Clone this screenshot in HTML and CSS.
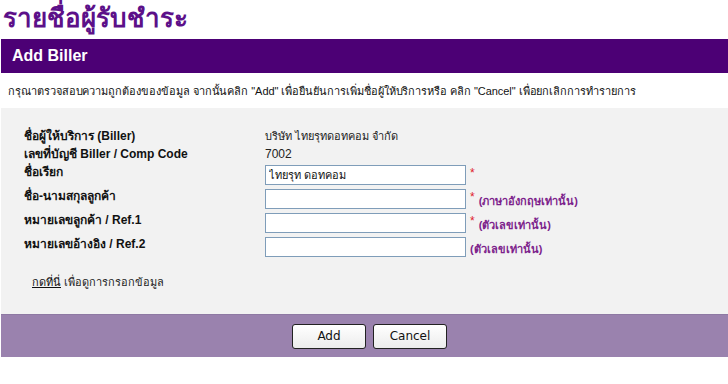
FILE: index.html
```html
<!DOCTYPE html>
<html lang="th">
<head>
  <meta charset="UTF-8" />
  <title>รายชื่อผู้รับชำระ</title>
  <link rel="stylesheet" href="styles.css">
</head>
<body>

  <!-- Page title -->
  <h1 class="page-title">รายชื่อผู้รับชำระ</h1>

  <div class="section-bar">Add Biller</div>

  <p class="hint">กรุณาตรวจสอบความถูกต้องของข้อมูล จากนั้นคลิก "Add" เพื่อยืนยันการเพิ่มชื่อผู้ให้บริการหรือ คลิก "Cancel" เพื่อยกเลิกการทำรายการ</p>

  <!-- Form -->
  <section class="form-panel">
    <div class="form-grid">
      <div class="label">ชื่อผู้ให้บริการ (Biller)</div>
      <div class="value">บริษัท ไทยรุทดอทคอม จำกัด</div>

      <div class="label">เลขที่บัญชี Biller / Comp Code</div>
      <div class="value num">7002</div>

      <div class="label field-label">ชื่อเรียก</div>
      <div class="field">
        <input type="text" value="ไทยรุท ดอทคอม">
        <span class="req">*</span>
      </div>

      <div class="label field-label">ชื่อ-นามสกุลลูกค้า</div>
      <div class="field">
        <input type="text">
        <span class="req">*</span>
        <span class="note">(ภาษาอังกฤษเท่านั้น)</span>
      </div>

      <div class="label field-label">หมายเลขลูกค้า / Ref.1</div>
      <div class="field">
        <input type="text">
        <span class="req">*</span>
        <span class="note">(ตัวเลขเท่านั้น)</span>
      </div>

      <div class="label field-label">หมายเลขอ้างอิง / Ref.2</div>
      <div class="field">
        <input type="text">
        <span class="note">(ตัวเลขเท่านั้น)</span>
      </div>
    </div>

    <p class="help"><a href="#">กดที่นี่</a> เพื่อดูการกรอกข้อมูล</p>
  </section>

  <div class="action-bar">
    <button type="button">Add</button>
    <button type="button">Cancel</button>
  </div>

</body>
</html>
```

FILE: styles.css
```css
* {
  margin: 0;
  padding: 0;
  box-sizing: border-box;
}

body {
  background: #fff;
  color: #222;
  font-family: "Liberation Sans", "Noto Sans", sans-serif;
  font-size: 11px;
  padding-left: 1px;
}

.page-title {
  color: #5c1089;
  font-size: 26px;
  font-weight: bold;
  line-height: 36px;
  height: 39px;
  padding-left: 2px;
}

.section-bar {
  background: #4c0075;
  color: #fff;
  font-size: 16px;
  font-weight: bold;
  height: 34px;
  line-height: 34px;
  padding-left: 11px;
}

.hint {
  color: #111;
  height: 35px;
  line-height: 36px;
  padding-left: 7px;
  letter-spacing: -0.05px;
}

/* ========== Form ========== */
.form-panel {
  background: #f2f2f2;
  height: 206px;
  padding: 19px 0 0 23px;
}

.form-grid {
  display: grid;
  grid-template-columns: 241px 1fr;
}

.label {
  font-size: 12px;
  font-weight: bold;
  color: #111;
  line-height: 18px;
  height: 18px;
}

.value {
  font-size: 11px;
  line-height: 18px;
  height: 18px;
}

.value.num {
  font-size: 12px;
}

.field-label {
  height: 24px;
}

.field {
  display: flex;
  align-items: center;
  height: 24px;
  gap: 4px;
}

.field input {
  width: 201px;
  height: 20px;
  border: 1px solid #7f9db9;
  background: #fff;
  font-family: inherit;
  font-size: 11px;
  padding: 0 3px;
  color: #111;
}

.req {
  color: #e0202a;
  font-size: 12px;
  align-self: flex-start;
  margin-top: 3px;
}

.note {
  color: #7d1f8c;
  font-size: 11px;
  font-weight: bold;
  margin-top: 3px;
}

.help {
  margin-top: 14px;
  padding-left: 8px;
  font-size: 11px;
}

.help a {
  color: #111;
}

/* ========== Buttons ========== */
.action-bar {
  background: #9a82ae;
  border-top: 1px solid #8e79a3;
  height: 43px;
  display: flex;
  align-items: center;
  gap: 7px;
  padding-left: 291px;
}

.action-bar button {
  width: 74px;
  height: 25px;
  border: 1px solid #222;
  border-radius: 3px;
  background: linear-gradient(#fff, #ececec);
  font-family: "DejaVu Sans", sans-serif;
  font-size: 12px;
  color: #111;
}
```
